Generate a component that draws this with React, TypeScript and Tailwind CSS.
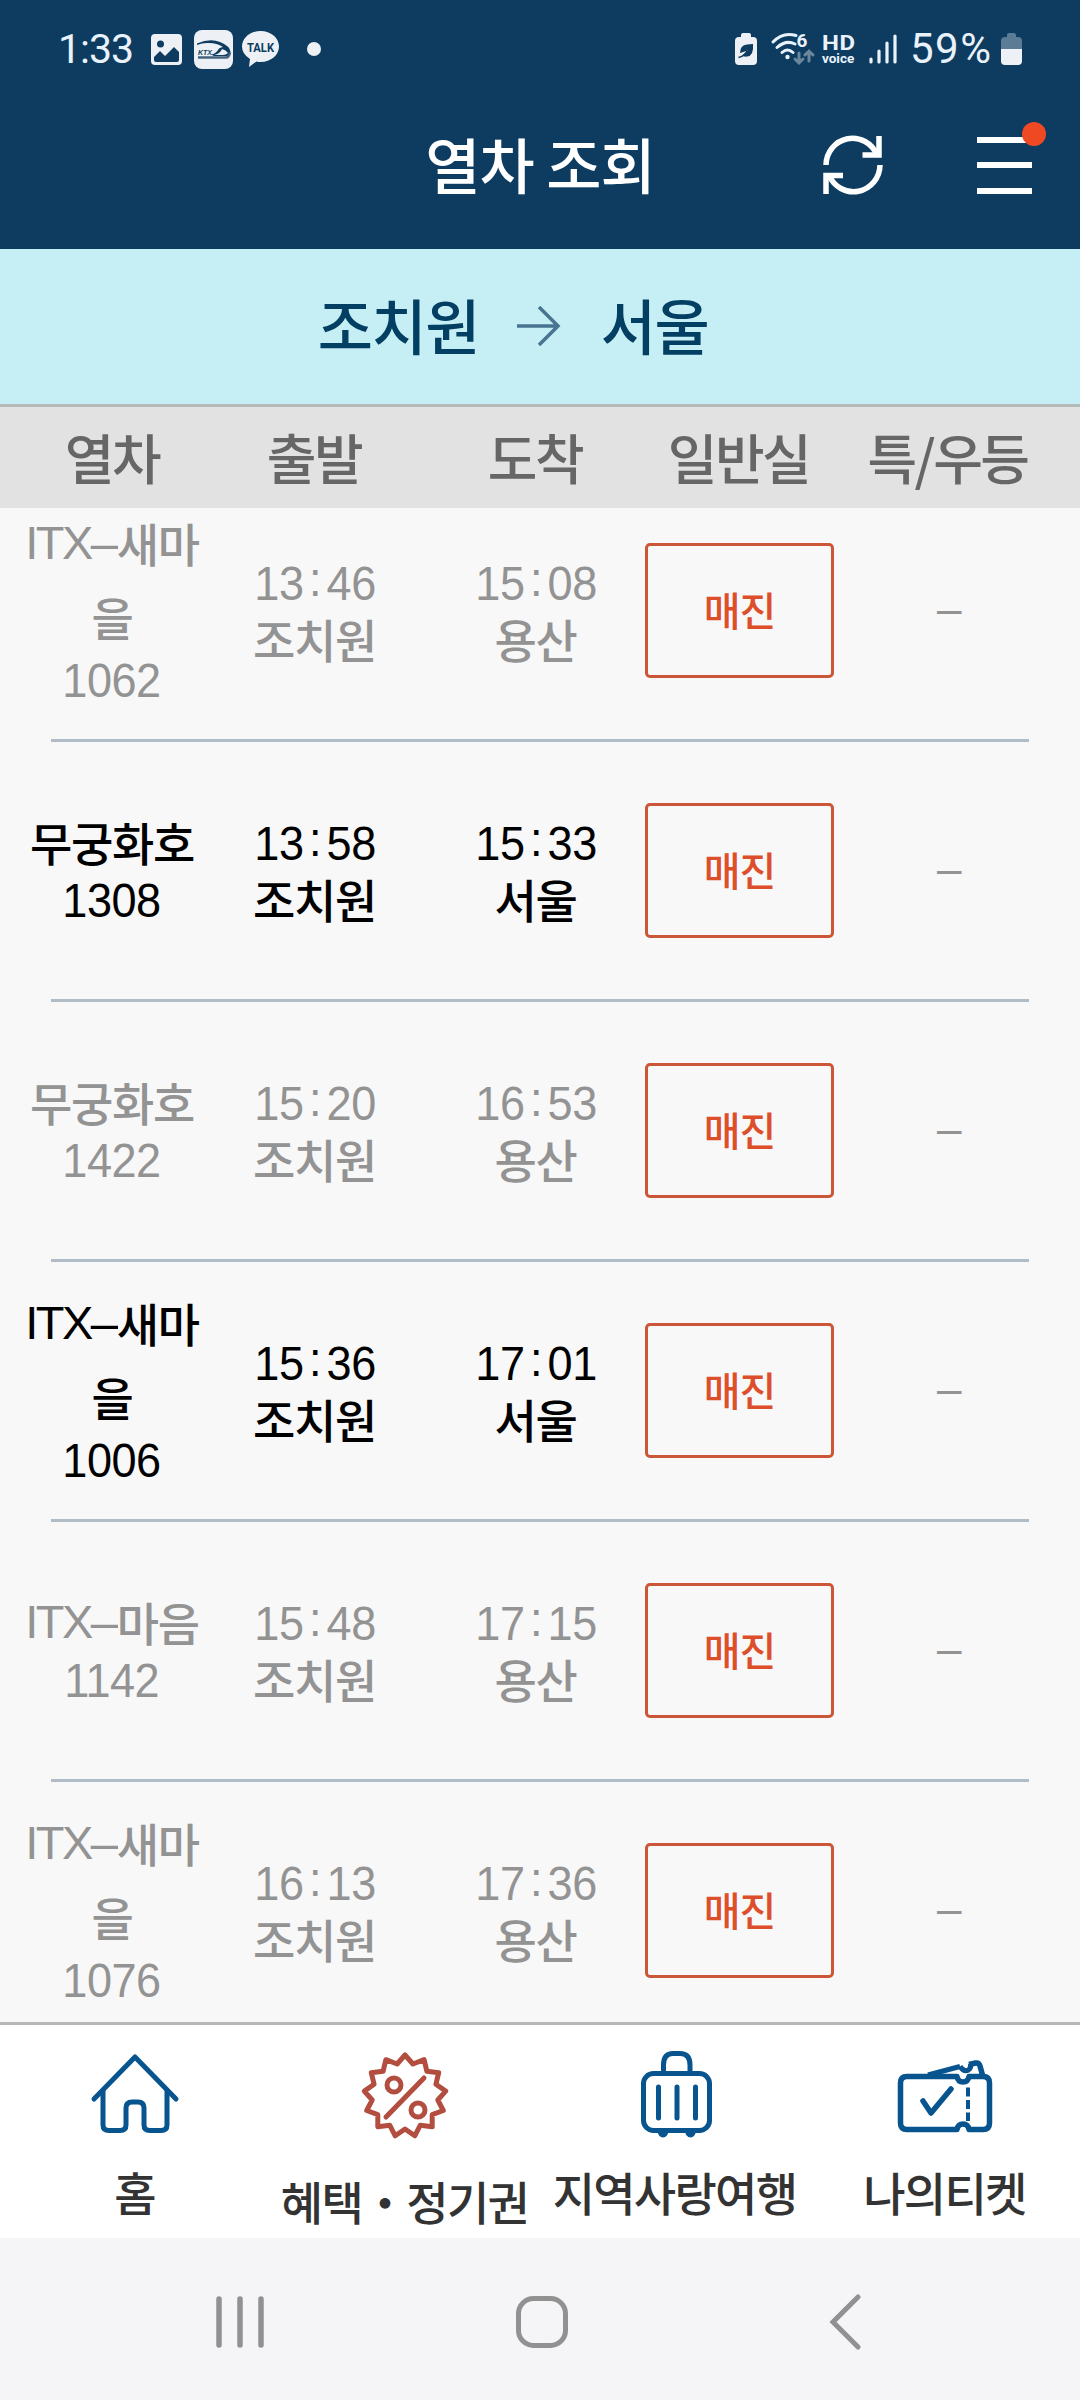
import React from 'react';

type Train = {
  name: string[];
  no: string;
  depTime: string;
  dep: string;
  arrTime: string;
  arr: string;
  active?: boolean;
};

const trains: Train[] = [
  { name: ['ITX–새마', '을'], no: '1062', depTime: '13:46', dep: '조치원', arrTime: '15:08', arr: '용산' },
  { name: ['무궁화호'], no: '1308', depTime: '13:58', dep: '조치원', arrTime: '15:33', arr: '서울', active: true },
  { name: ['무궁화호'], no: '1422', depTime: '15:20', dep: '조치원', arrTime: '16:53', arr: '용산' },
  { name: ['ITX–새마', '을'], no: '1006', depTime: '15:36', dep: '조치원', arrTime: '17:01', arr: '서울', active: true },
  { name: ['ITX–마음'], no: '1142', depTime: '15:48', dep: '조치원', arrTime: '17:15', arr: '용산' },
  { name: ['ITX–새마', '을'], no: '1076', depTime: '16:13', dep: '조치원', arrTime: '17:36', arr: '용산' },
];

const columns = ['열차', '출발', '도착', '일반실', '특/우등'];

// 13 tips, rounded by the stroke join
const badgePoints = Array.from({ length: 26 }, (_, i) => {
  const r = i % 2 === 0 ? 41 : 33;
  const a = (Math.PI * i) / 13 - Math.PI / 2;
  return `${(45 + r * Math.cos(a)).toFixed(1)},${(45 + r * Math.sin(a)).toFixed(1)}`;
}).join(' ');

const HomeIcon = () => (
  <svg width="90" height="90" viewBox="0 0 90 90" fill="none" stroke="#07548f" strokeWidth="5" strokeLinecap="round" strokeLinejoin="round">
    <path d="M4 48 45 6l41 42" />
    <path d="M13 40v34q0 5.500 6 5.500h11q6 0 6-5.500V57q0-6 6-6h6q6 0 6 6v17q0 5.500 6 5.500h11q6 0 6-5.500V40" />
  </svg>
);

const BenefitIcon = () => (
  <svg width="90" height="90" viewBox="0 0 90 90" fill="none" stroke="#b24d40" strokeWidth="5" strokeLinecap="round" strokeLinejoin="round">
    <polygon points={badgePoints} />
    <circle cx="34" cy="34" r="7" />
    <circle cx="58" cy="59" r="7" />
    <path d="M64 27 26 66" />
  </svg>
);

const TravelIcon = () => (
  <svg width="90" height="90" viewBox="0 0 90 90" fill="none" stroke="#07548f" strokeWidth="5" strokeLinecap="round">
    <path d="M33.500 22V14Q33.500 2.500 43 2.500h7q10 0 10 11.500v8" />
    <rect x="13.500" y="22.500" width="66" height="57" rx="10" />
    <path d="M28.500 36v31M47 36v31M65.500 36v31" />
    <path d="M27.500 80a5.500 6.500 0 0 0 11 0zM55 80a5.500 6.500 0 0 0 11 0z" fill="#07548f" stroke="none" />
  </svg>
);

const TicketIcon = () => (
  <svg width="96" height="90" viewBox="0 0 96 90" fill="none" stroke="#07548f" strokeWidth="5.500" strokeLinejoin="round">
    <path d="M31 24 63 15.500M63 15.500q4 6 8.500 3.500 3-2 2-6.500" strokeWidth="5" />
    <path d="M72 13.500l6.500-1.500q3.500-.5 4.500 3l2.500 9" />
    <path d="M60 25.500H10q-6.500 0-6.500 6.500v40q0 6.500 6.500 6.500h50q1-5.500 6-5.500t6 5.500h14q6.500 0 6.500-6.500V32q0-6.500-6.500-6.500H72q-1 5.500-6 5.500t-6-5.500z" />
    <path d="M26 50l8 12 20-24" strokeLinecap="round" />
    <path d="M71 36.500v33.500" strokeWidth="4" strokeDasharray="9 3.500" />
  </svg>
);

const tabs = [
  { label: '홈', icon: HomeIcon },
  { label: '혜택・정기권', icon: BenefitIcon, low: true },
  { label: '지역사랑여행', icon: TravelIcon },
  { label: '나의티켓', icon: TicketIcon },
];

const StatusBar = () => (
  <div className="flex h-[98px] items-center pl-[58px] pr-[58px] text-[#e9f2fa]">
    <span className="w-[93px] font-['Roboto'] text-[41px] leading-none tracking-[-1px]">1:33</span>
    <svg width="31" height="31" viewBox="0 0 31 31">
      <rect width="31" height="31" rx="4" fill="#edf1f5" />
      <circle cx="9.500" cy="10" r="3.500" fill="#0d3c60" />
      <path d="M3 23l6-6 5 5 9-9 5 5v8q0 2-2 2H5q-2 0-2-2z" fill="#0d3c60" />
    </svg>
    <svg className="ml-3" width="39" height="39" viewBox="0 0 39 39">
      <rect width="39" height="39" rx="8" fill="#edf1f5" />
      <path d="M3 13.500Q16 8 26 12q10 4 10.500 10 0 3.500-3 4H20l-3-1.500q5-.5 8-6 2-1.500 4-1.500-6-4-14-4-6-.5-12 2z" fill="#0d3c60" />
      <path d="M20 25q6-1 8-6 4 1 6 4-2 2-5 2z" fill="#edf1f5" />
      <path d="M4 27.500h28q3 0 4-5" fill="none" stroke="#44627d" strokeWidth="2.500" />
      <text x="4" y="24.500" fontSize="7.500" fontWeight="700" fontStyle="italic" fontFamily="Liberation Sans" fill="#0d3c60" textLength="14" lengthAdjust="spacingAndGlyphs">KTX</text>
    </svg>
    <svg className="ml-[9px]" width="37" height="36" viewBox="0 0 37 36">
      <path d="M18.500 0C29 0 37 7 37 15.500S29 31 18.500 31q-2 0-4-.5L7 36l1-8Q0 23 0 15.500C0 7 8 0 18.500 0z" fill="#edf1f5" />
      <text x="5" y="20.500" fontSize="13" fontWeight="700" fontFamily="Roboto" fill="#0d3c60" textLength="27" lengthAdjust="spacingAndGlyphs">TALK</text>
    </svg>
    <div className="ml-[28px] size-[14px] rounded-full bg-[#edf1f5]" />

    <div className="ml-auto flex items-center">
      <svg width="22" height="32" viewBox="0 0 22 32">
        <path d="M6 4V2q0-2 2-2h6q2 0 2 2v2h2q4 0 4 4v20q0 4-4 4H4q-4 0-4-4V8q0-4 4-4z" fill="#edf1f5" />
        <path d="M5 20q0-8 7-8.500l6-.5q1 12-6 12.500-3 .5-5-1l6-5" fill="#0d3c60" />
        <path d="M3.500 24.500q6-1 8.500-6.500" fill="none" stroke="#0d3c60" strokeWidth="1.500" />
      </svg>
      <svg className="ml-[14px] overflow-visible" width="44" height="34" viewBox="0 0 44 34" fill="none" stroke="#e9f2fa" strokeWidth="3" strokeLinecap="round">
        <path d="M2 10Q12-.5 25 3.500M6 15.500q9-8 18-3.500M11 20.500q5.500-5 11 0" />
        <circle cx="16.500" cy="25" r="2.200" fill="#e9f2fa" stroke="none" />
        <text x="25.500" y="14.500" fontSize="19" fontWeight="700" fontFamily="Roboto" fill="#e9f2fa" stroke="none">6</text>
        <path d="M28 21v10m-4-4 4 4 4-4M38 29V19m-4 4 4-4 4 4" stroke="#6b879e" />
      </svg>
      <div className="ml-[7px] flex w-[34px] flex-col font-['Roboto'] font-bold">
        <span className="h-[17px] w-[29px] origin-left scale-x-[1.14] text-[21px] leading-[17px] tracking-[0.500px]">HD</span>
        <span className="h-[12px] text-[13.500px] leading-[12px]">voice</span>
      </div>
      <svg className="ml-[13px]" width="28" height="30" viewBox="0 0 28 30" stroke="#e9f2fa" strokeWidth="3.200" strokeLinecap="round">
        <path d="M2 25v3M10 17v11M18 9v19M26 2v26" />
      </svg>
      <span className="ml-[13px] w-[88px] whitespace-nowrap font-['Roboto'] text-[42px] leading-none tracking-[1.500px]">59%</span>
      <svg className="ml-[3px]" width="21" height="32" viewBox="0 0 21 32">
        <path d="M6 4V2q0-2 2-2h5q2 0 2 2v2h2q4 0 4 4v8H0V8q0-4 4-4z" fill="#5c7b95" />
        <path d="M0 16h21v12q0 4-4 4H4q-4 0-4-4z" fill="#edf1f5" />
      </svg>
    </div>
  </div>
);

const TitleBar = () => (
  <div className="grid h-[151px] grid-cols-[1fr_auto_1fr] items-center pb-[17px]">
    <h1 className="relative -top-[2px] col-start-2 whitespace-nowrap text-[60px] font-medium leading-none tracking-[-1px] text-white">
      열차 조회
    </h1>
    <div className="flex items-center justify-end pr-12">
      <svg width="60" height="60" viewBox="0 0 60 60" fill="none" stroke="#fff" strokeWidth="5.500">
        <path d="M3 30A26.500 27 0 0 1 54 20M57 30A26.500 27 0 0 1 6 40" />
        <path d="M56 1v19H39.500M3 59V40.500h17" />
      </svg>
      <div className="relative ml-[94px] flex w-[55px] flex-col gap-[19.500px]">
        <div className="h-[6px] bg-white" />
        <div className="h-[6px] bg-white" />
        <div className="h-[6px] bg-white" />
        <span className="absolute -right-[14px] -top-[15px] size-6 rounded-full bg-[#ef4923]" />
      </div>
    </div>
  </div>
);

const Digits = ({ value }: { value: string }) => {
  const [left, right] = value.split(':');
  return (
    <span className="inline-block scale-x-[.92] whitespace-nowrap font-['Liberation_Sans'] text-[49px] tracking-[-.5px]">
      {left}
      {right && <span className="relative -top-1 inline-block w-[25px] text-center">:</span>}
      {right}
    </span>
  );
};

const Stop = ({ time, station }: { time: string; station: string }) => (
  <div className="flex flex-col items-center pt-[3px]">
    <span className="flex h-[55px] items-center leading-[55px]">
      <Digits value={time} />
    </span>
    <span className="mr-[1px] h-[57px] font-medium leading-[54px]">{station}</span>
  </div>
);

const TrainRow = ({ train }: { train: Train }) => (
  <div className="shrink-0">
    <div
      className={`grid h-[257px] grid-cols-[180px_224px_218px_189px_229px] items-center pl-[23px] text-[46px] tracking-[-1.300px] ${
        train.active ? 'text-black' : 'text-[#939393]'
      }`}
    >
      <div className={`-ml-[2px] flex flex-col items-center ${train.name.length > 1 ? '-mt-[11px]' : '-mt-[12px]'}`}>
        {train.name.map((line) => (
          <span key={line} className="flex h-[74px] items-center whitespace-nowrap font-medium leading-[74px]">
            {line.startsWith('ITX–') ? (
              <>
                <span className="font-['Liberation_Sans'] text-[47px] font-normal tracking-[-2.500px]">ITX</span>
                <span className="font-['Liberation_Sans'] text-[49px] font-normal">–</span>
                <span className="relative -top-[1px]">{line.slice(4)}</span>
              </>
            ) : (
              <span className="relative -top-[1px]">{line}</span>
            )}
          </span>
        ))}
        <span className={`flex h-[50px] items-center leading-[50px] ${train.name.length > 1 ? 'mt-[1px]' : '-mt-[4px]'}`}>
          <Digits value={train.no} />
        </span>
      </div>
      <Stop time={train.depTime} station={train.dep} />
      <Stop time={train.arrTime} station={train.arr} />
      <button className="h-[135px] rounded-[5px] border-[3px] border-[#cc5638] pb-[4px] text-[40px] font-medium tracking-[-1px] text-[#dd4f2b]">
        매진
      </button>
      <span className="-mt-[4px] text-center font-['Liberation_Sans'] text-[44px] text-[#939393]">–</span>
    </div>
    <div className="mx-[51px] h-[3px] bg-[#b0bcc6]" />
  </div>
);

export default function App() {
  return (
    <div className="flex h-[2400px] w-[1080px] flex-col overflow-hidden bg-[#f8f8f8] font-['Noto_Sans_CJK_KR',sans-serif]">
      <header className="bg-[#0d3c60]">
        <StatusBar />
        <TitleBar />
      </header>

      {/* Route */}
      <div className="flex h-[158px] items-center justify-center border-b-[3px] border-[#b6bab9] bg-[#c6eff5] pb-[5px] pr-[54px] text-[60px] font-medium leading-none tracking-[-1.500px] text-[#033e63]">
        <span>조치원</span>
        <svg className="relative top-[2px] ml-[38px] mr-[40px]" width="44" height="40" viewBox="0 0 44 40" fill="none" stroke="#487491" strokeWidth="3.500">
          <path d="M0 20h41M22 1l19 19-19 19" />
        </svg>
        <span>서울</span>
      </div>

      <div className="grid h-[101px] grid-cols-[180px_224px_218px_189px_229px] items-center bg-[#e2e2e2] pb-[2px] pl-[22px] text-center text-[54px] font-medium leading-none tracking-[-2.500px] text-[#666]">
        {columns.map((c) => (
          <span key={c} className="whitespace-nowrap">{c}</span>
        ))}
      </div>

      {/* Train list, scrolled a little under the column header */}
      <main className="h-[1514px] overflow-hidden">
        <div className="-mt-[26px] flex flex-col">
          {trains.map((t) => (
            <TrainRow key={t.no} train={t} />
          ))}
        </div>
      </main>

      <nav className="grid h-[216px] grid-cols-4 border-t-[3px] border-[#b6b6b6] bg-white">
        {tabs.map(({ label, icon: Icon, low }) => (
          <div key={label} className="flex flex-col items-center pt-[26px]">
            <Icon />
            <span className={`-ml-[1px] whitespace-nowrap text-[46px] font-medium leading-none tracking-[-1.700px] text-[#333] ${low ? 'mt-[36px]' : 'mt-[27px]'}`}>
              {label}
            </span>
          </div>
        ))}
      </nav>

      {/* System navigation */}
      <div className="flex h-[162px] items-center bg-[#f5f5f8] pl-[214px] pt-[5px]">
        <svg width="52" height="56" viewBox="0 0 52 56" stroke="#919191" strokeWidth="5.500" strokeLinecap="round">
          <path d="M5 5v46M26 5v46M47 5v46" />
        </svg>
        <svg className="ml-[248px]" width="56" height="56" viewBox="0 0 56 56" fill="none" stroke="#919191" strokeWidth="5">
          <rect x="4.500" y="4.500" width="47" height="47" rx="15" />
        </svg>
        <svg className="ml-[258px]" width="36" height="56" viewBox="0 0 36 56" fill="none" stroke="#919191" strokeWidth="5" strokeLinecap="round">
          <path d="M30 3 5 28l25 25" />
        </svg>
      </div>
    </div>
  );
}
